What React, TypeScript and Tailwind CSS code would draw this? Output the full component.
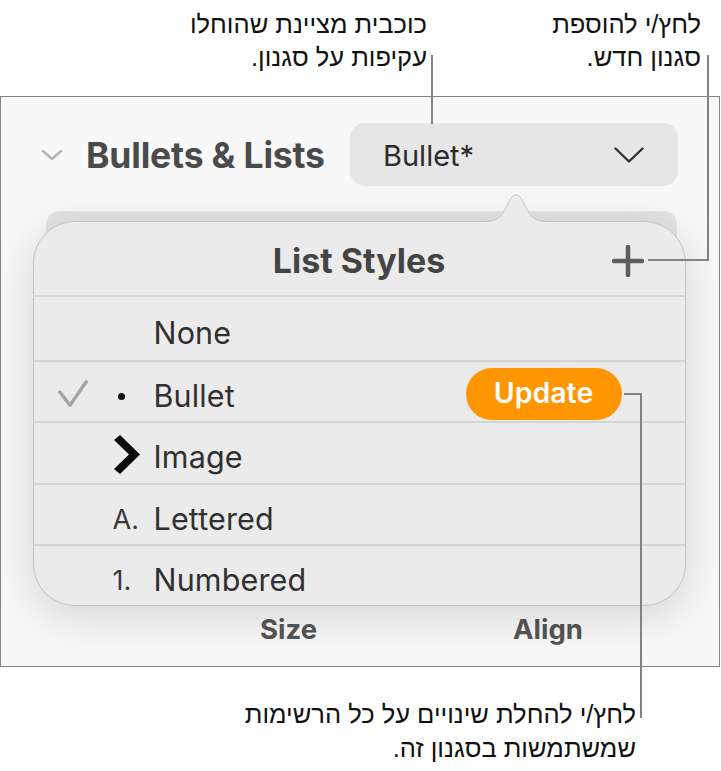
import React from "react";

const ui = { fontFamily: "Inter, 'Noto Sans', sans-serif" };
const heb = { fontFamily: "'Liberation Sans', 'DejaVu Sans', sans-serif" };

function Row({
  check,
  marker,
  label,
  update,
  h,
}: {
  check?: boolean;
  marker?: React.ReactNode;
  label: string;
  update?: boolean;
  h: string;
}) {
  return (
    <div className={`flex items-center pt-[9px] ${h}`}>
      <div className="w-[79px] pl-[24px] flex items-center -mt-[4px]">
        {check && (
          <svg width="30" height="28" viewBox="0 0 30 28">
            <path d="M1.8 12 L12 25.2 L28.2 1.8" fill="none" stroke="#a4a4a4" strokeWidth="3.4" strokeLinecap="round" strokeLinejoin="round" />
          </svg>
        )}
      </div>
      <div className="w-[41px] flex items-center text-[27px] leading-none text-[#3a3a3a]">{marker}</div>
      <div className="text-[30.5px] leading-none text-[#303030] tracking-[0.005em]">{label}</div>
      {update && (
        <div className="ml-auto mr-[63px] w-[156px] h-[52px] -mt-[5px] rounded-full bg-[#ff9500] flex items-center justify-center text-white text-[28.5px] font-semibold">
          Update
        </div>
      )}
    </div>
  );
}

export default function App() {
  return (
    <div className="relative w-[721px] h-[771px] bg-white overflow-hidden" style={ui}>
      {/* top callouts */}
      <div className="flex h-[96px] pt-[8px] text-[25.5px] leading-[33px] text-[#111]" style={heb}>
        <div className="w-[427px] text-right" dir="rtl">
          <div>כוכבית מציינת שהוחלו</div>
          <div>עקיפות על סגנון.</div>
        </div>
        <div className="w-[274px] text-right" dir="rtl">
          <div>לחץ/י להוספת</div>
          <div>סגנון חדש.</div>
        </div>
      </div>

      {/* screenshot frame */}
      <div className="w-[720px] h-[571px] border-[1.5px] border-[#838383] bg-[#f8f8f8] flex flex-col">
        <div className="flex items-center mt-[26px] h-[63px]">
          <div className="ml-[40px] w-[24px] flex items-center">
            <svg width="22" height="12" viewBox="0 0 22 12">
              <polyline points="2,2 11,10 20,2" fill="none" stroke="#b4b4b4" strokeWidth="2.5" strokeLinecap="round" strokeLinejoin="round" />
            </svg>
          </div>
          <div className="ml-[21px] mt-[2px] text-[35.5px] font-bold text-[#4a4a4a] tracking-[-0.005em] leading-none">Bullets &amp; Lists</div>
          <div className="ml-auto mr-[41px] w-[328px] h-[63px] rounded-[15px] bg-[#e6e6e6] flex items-center justify-between pl-[33px] pr-[34px]">
            <span className="text-[29px] text-[#2c2c2c] leading-none mt-[2px]">Bullet*</span>
            <svg width="30" height="16" viewBox="0 0 30 16">
              <polyline points="1.5,1.5 15,14.5 28.5,1.5" fill="none" stroke="#333" strokeWidth="2.4" strokeLinecap="round" strokeLinejoin="round" />
            </svg>
          </div>
        </div>

        {/* popover */}
        <div className="relative ml-[31.5px] mt-[35px] w-[653px] h-[385px]">
          <div className="absolute left-[13px] -top-[10px] w-[631px] h-[60px] rounded-[14px] bg-[#e3e3e3]" />
          <div className="relative h-full rounded-[42px] border border-[#c4c4c4] bg-[#ebebeb] shadow-[0_10px_44px_rgba(0,0,0,0.15)] flex flex-col overflow-hidden">
            <div className="grid grid-cols-[1fr_auto_1fr] items-center h-[73px] pt-[4px]">
              <div />
              <div className="text-[34px] font-bold text-[#444] leading-none">List Styles</div>
              <div className="justify-self-end mr-[41px] flex items-center">
                <svg width="32" height="32" viewBox="0 0 32 32">
                  <line x1="16" y1="2" x2="16" y2="30" stroke="#5e5e5e" strokeWidth="4.5" strokeLinecap="round" />
                  <line x1="2" y1="16" x2="30" y2="16" stroke="#5e5e5e" strokeWidth="4.5" strokeLinecap="round" />
                </svg>
              </div>
            </div>
            <div className="h-[2px] bg-[#d4d4d4]" />
            <Row h="h-[63px]" label="None" />
            <div className="h-[2px] bg-[#d4d4d4]" />
            <Row
              h="h-[59px]"
              check
              update
              label="Bullet"
              marker={<span className="ml-[5px] block w-[7px] h-[7px] rounded-full bg-[#111]" />}
            />
            <div className="h-[2px] bg-[#d4d4d4]" />
            <Row
              h="h-[60px]"
              label="Image"
              marker={
                <svg width="28" height="41" viewBox="0 0 28 41" className="-mt-[6px]">
                  <polygon points="1,6 7,1 27,20.5 7,40 1,35 16,20.5" fill="#0b0b0b" strokeLinejoin="round" />
                </svg>
              }
            />
            <div className="h-[2px] bg-[#d4d4d4]" />
            <Row h="h-[59px]" label="Lettered" marker={<span>A.</span>} />
            <div className="h-[2px] bg-[#d4d4d4]" />
            <Row h="h-[59px]" label="Numbered" marker={<span>1.</span>} />
          </div>
          {/* arrow */}
          <svg className="absolute left-[448px] -top-[29px]" width="70" height="32" viewBox="0 0 70 32">
            <path d="M0 29.5 C12 29.5 17 28 22 21 L30 6 Q35 -1 40 6 L48 21 C53 28 58 29.5 70 29.5 L70 32 L0 32 Z" fill="#ebebeb" />
            <path d="M0 29.5 C12 29.5 17 28 22 21 L30 6 Q35 -1 40 6 L48 21 C53 28 58 29.5 70 29.5" fill="none" stroke="#c4c4c4" strokeWidth="1" />
          </svg>
        </div>

        <div className="flex items-center mt-[8px] h-[32px] text-[27.5px] font-bold text-[#555] leading-none">
          <div className="ml-[259px]">Size</div>
          <div className="ml-[196px]">Align</div>
        </div>
      </div>

      {/* bottom callout */}
      <div className="mt-[30px] w-[636px] text-right text-[25.5px] leading-[34px] text-[#111]" dir="rtl" style={heb}>
        <div>לחץ/י להחלת שינויים על כל הרשימות</div>
        <div>שמשתמשות בסגנון זה.</div>
      </div>

      {/* leader lines */}
      <div className="absolute left-[431px] top-[55px] w-[2px] h-[69px] bg-[#828282]" />
      <div className="absolute left-[707px] top-[55px] w-[2px] h-[206px] bg-[#828282]" />
      <div className="absolute left-[648px] top-[259px] w-[61px] h-[2px] bg-[#828282]" />
      <div className="absolute left-[624px] top-[393px] w-[18px] h-[2px] bg-[#828282]" />
      <div className="absolute left-[640px] top-[393px] w-[2px] h-[325px] bg-[#828282]" />
    </div>
  );
}
